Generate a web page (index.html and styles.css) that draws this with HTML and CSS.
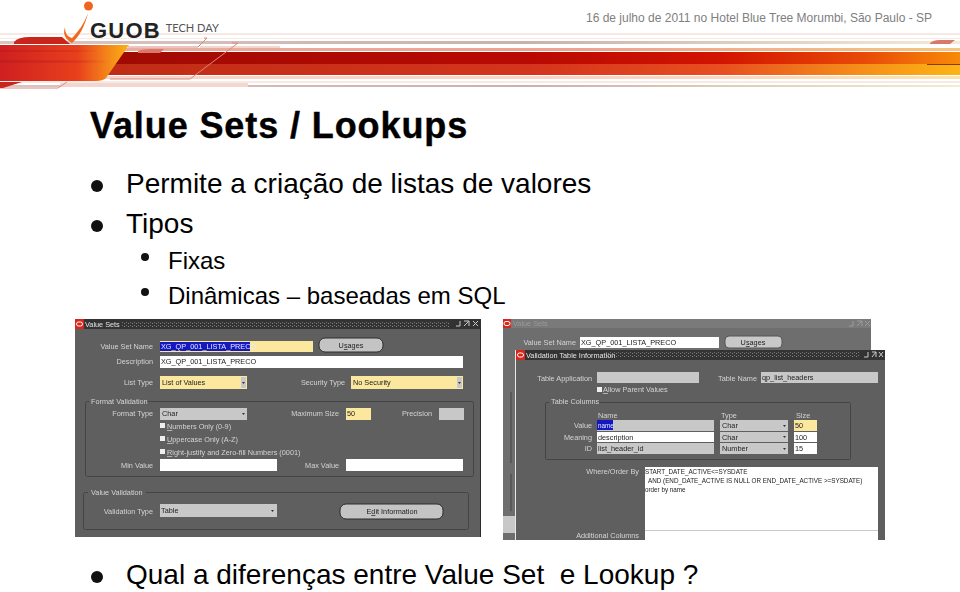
FILE: index.html
```html
<!DOCTYPE html>
<html lang="pt-BR">
<head>
<meta charset="utf-8">
<title>Value Sets / Lookups</title>
<link rel="stylesheet" href="styles.css">
</head>
<body>
<header class="banner">
  <svg class="banner-art" viewBox="0 0 960 90" width="960" height="90" aria-hidden="true">
    <defs>
      <linearGradient id="bandTop"><stop offset="0" stop-color="#9a0a04"/><stop offset=".55" stop-color="#b80a02"/><stop offset=".75" stop-color="#d21400"/><stop offset=".9" stop-color="#e84a08"/><stop offset="1" stop-color="#f88a08"/></linearGradient>
      <linearGradient id="bandLow"><stop offset="0" stop-color="#bb2a14"/><stop offset=".55" stop-color="#d4341c"/><stop offset=".75" stop-color="#e84e20"/><stop offset=".9" stop-color="#f69018"/><stop offset="1" stop-color="#fdb414"/></linearGradient>
      <linearGradient id="fire" x1="0" x2="1" y1="0" y2="0"><stop offset="0" stop-color="#cf1f20"/><stop offset=".6" stop-color="#e8401c"/><stop offset=".85" stop-color="#f58a1a"/><stop offset="1" stop-color="#fbb313"/></linearGradient>
      <linearGradient id="shade"><stop offset="0" stop-color="#b81a1c" stop-opacity=".5"/><stop offset=".7" stop-color="#b81a1c" stop-opacity=".25"/><stop offset="1" stop-color="#b81a1c" stop-opacity="0"/></linearGradient>
      <linearGradient id="greyLine"><stop offset="0" stop-color="#d8c6c2"/><stop offset=".55" stop-color="#cbb1ac"/><stop offset=".8" stop-color="#e2d2c0"/><stop offset="1" stop-color="#f3ead8"/></linearGradient>
      <linearGradient id="pinkLine"><stop offset="0" stop-color="#e8b0a4"/><stop offset=".6" stop-color="#eda390"/><stop offset="1" stop-color="#f8c480"/></linearGradient>
      <linearGradient id="paleLine"><stop offset="0" stop-color="#f5d4ca"/><stop offset=".7" stop-color="#f8d4c4"/><stop offset="1" stop-color="#fbe2b0"/></linearGradient>
    </defs>
    <rect class="s-faint" x="0" y="33" width="960" height="2"/>
    <rect class="s-faint" x="0" y="38" width="960" height="1"/>
    <rect fill="url(#greyLine)" x="0" y="41" width="960" height="3"/>
    <rect class="s-pale" x="200" y="46" width="80" height="2"/>
    <rect fill="url(#pinkLine)" x="0" y="48" width="960" height="3"/>
    <rect fill="url(#bandTop)" x="0" y="52" width="960" height="12"/>
    <rect fill="url(#bandLow)" x="0" y="64" width="960" height="11"/>
    <rect fill="url(#paleLine)" x="0" y="76" width="960" height="3"/>
    <rect class="s-faint" x="0" y="81" width="960" height="2"/>
    <rect fill="url(#greyLine)" x="0" y="85" width="960" height="2"/>
    <rect class="s-pale" x="60" y="83" width="188" height="4"/>
    <path class="s-lip" d="M14 42 Q18 37 30 37 L62 37 L70 44 L14 44 Z"/>
    <path class="s-blob" d="M138 51 Q142 49 150 49 L164 49 L160 53 L138 53 Z"/>
    <path class="s-line" d="M128 47 H198 L207 38 H204"/>
    <path class="s-line" d="M110 79 H190 L238 43 H232"/>
    <path class="s-line" d="M0 88 H58 L67 82"/>
    <path fill="url(#fire)" d="M0 45 H129 L106 78 Q103 81 96 81 H0 Z"/>
    <rect fill="url(#shade)" x="0" y="50" width="100" height="2"/>
    <rect fill="url(#shade)" x="0" y="60" width="110" height="3"/>
    <path class="s-lip" d="M0 82 H22 L3 88 H0 Z"/>
    <path class="s-blob" d="M930 43 Q933 40 940 40 H955 L950 44 H930 Z"/>
    <rect class="s-dark" x="927" y="64" width="33" height="1"/>
    <circle class="logo-dot" cx="88.500" cy="6" r="4.500"/>
    <path class="logo-swoosh" d="M88 13 C85 26 79 37 72 43 C67 40 62 36 65 27 C65 34 68 37 72 38 C78 32 84 24 88 13 Z"/>
  </svg>
  <div class="logo-text"><span class="logo-name">GUOB</span><span class="logo-sub">TECH DAY</span></div>
  <p class="event-date">16 de julho de 2011 no Hotel Blue Tree Morumbi, São Paulo - SP</p>
</header>

<main class="slide">
  <h1 class="slide-title">Value Sets / Lookups</h1>
  <ul class="bullets">
    <li class="bullet">Permite a criação de listas de valores</li>
    <li class="bullet">Tipos</li>
  </ul>
  <ul class="sub-bullets">
    <li class="sub-bullet">Fixas</li>
    <li class="sub-bullet">Dinâmicas – baseadas em SQL</li>
  </ul>

  <div class="shots">
    <svg class="shot" viewBox="75 320 407 219" width="407" height="219" role="img" aria-label="Janela Value Sets">
      <defs>
        <pattern id="dots" width="4" height="3" patternUnits="userSpaceOnUse"><rect width="4" height="3" fill="#333"/><rect x="0" y="0" width="1" height="1" fill="#8a8a8a"/><rect x="2" y="2" width="1" height="1" fill="#777"/></pattern>
      </defs>
      <rect class="win" x="75" y="320" width="406" height="218"/>
      <rect class="win-edge" x="480" y="320" width="1" height="218"/>
      <rect class="titlebar" x="75" y="320" width="406" height="10"/>
      <rect class="titledots" x="122" y="322" width="328" height="6"/>
      <rect class="oracle" x="75" y="320" width="9" height="10"/>
      <rect class="oracle-o" x="76.500" y="323" width="6" height="4" rx="2"/>
      <text class="t-title" x="85" y="328">Value Sets</text>
      <path class="win-ctl" d="M456 327h4v-5M464 322h5v5M464 327l5-5M473 322l5 5M478 322l-5 5"/>

      <text class="t-lab" x="153" y="350" text-anchor="end">Value Set Name</text>
      <rect class="f-y" x="160" y="342" width="153" height="11"/>
      <rect class="f-sel" x="160" y="343" width="90" height="9"/>
      <text class="t-sel" x="161" y="350">XG_QP_001_LISTA_PRECO</text>
      <rect class="btn" x="319" y="339" width="64" height="14" rx="6"/>
      <text class="t-btn" x="351" y="349" text-anchor="middle">U<tspan class="u">s</tspan>ages</text>

      <text class="t-lab" x="153" y="365" text-anchor="end">Description</text>
      <rect class="f-w" x="160" y="357" width="303" height="12"/>
      <text class="t-f" x="161" y="365">XG_QP_001_LISTA_PRECO</text>

      <text class="t-lab" x="153" y="386" text-anchor="end">List Type</text>
      <rect class="f-y" x="160" y="377" width="87" height="13"/>
      <text class="t-f" x="162" y="386">List of Values</text>
      <rect class="drop" x="241" y="378" width="5" height="11"/>
      <path class="arrow" d="M242 383h3l-1.500 2z"/>
      <text class="t-lab" x="345" y="386" text-anchor="end">Security Type</text>
      <rect class="f-y" x="351" y="377" width="112" height="13"/>
      <text class="t-f" x="353" y="386">No Security</text>
      <rect class="drop" x="457" y="378" width="5" height="11"/>
      <path class="arrow" d="M458 383h3l-1.500 2z"/>

      <rect class="group" x="85.500" y="402.500" width="388" height="75" rx="2"/>
      <rect class="legend" x="89" y="398" width="59" height="9"/>
      <text class="t-lab" x="91" y="405">Format Validation</text>
      <text class="t-lab" x="153" y="417" text-anchor="end">Format Type</text>
      <rect class="f-g" x="160" y="409" width="87" height="12"/>
      <text class="t-f" x="162" y="417">Char</text>
      <path class="arrow" d="M242 414h3l-1.500 2z"/>
      <text class="t-lab" x="339" y="417" text-anchor="end">Maximum Size</text>
      <rect class="f-y" x="346" y="409" width="25" height="12"/>
      <text class="t-f" x="347" y="417">50</text>
      <text class="t-lab" x="432" y="417" text-anchor="end">Precision</text>
      <rect class="f-g" x="439" y="409" width="25" height="12"/>

      <rect class="check" x="160" y="424" width="5" height="5"/>
      <text class="t-lab" x="167" y="430"><tspan class="u">N</tspan>umbers Only (0-9)</text>
      <rect class="check" x="160" y="437" width="5" height="5"/>
      <text class="t-lab" x="167" y="443"><tspan class="u">U</tspan>ppercase Only (A-Z)</text>
      <rect class="check" x="160" y="450" width="5" height="5"/>
      <text class="t-lab" x="167" y="456"><tspan class="u">R</tspan>ight-justify and Zero-fill Numbers (0001)</text>

      <text class="t-lab" x="153" y="469" text-anchor="end">Min Value</text>
      <rect class="f-w" x="160" y="460" width="117" height="12"/>
      <text class="t-lab" x="339" y="469" text-anchor="end">Max Value</text>
      <rect class="f-w" x="346" y="460" width="117" height="12"/>

      <rect class="group" x="83.500" y="493.500" width="385" height="37" rx="2"/>
      <rect class="legend" x="88" y="489" width="58" height="9"/>
      <text class="t-lab" x="91" y="496">Value Validation</text>
      <text class="t-lab" x="153" y="515" text-anchor="end">Validation Type</text>
      <rect class="f-g" x="160" y="505" width="117" height="13"/>
      <text class="t-f" x="161" y="514">Table</text>
      <path class="arrow" d="M271 511h3l-1.500 2z"/>
      <rect class="btn" x="340" y="505" width="103" height="15" rx="6"/>
      <text class="t-btn" x="392" y="515" text-anchor="middle">E<tspan class="u">d</tspan>it Information</text>
    </svg>

    <svg class="shot" viewBox="503 320 382 221" width="382" height="221" role="img" aria-label="Janela Validation Table Information">
      <rect class="win-back" x="503" y="320" width="368" height="221"/>
      <rect class="titlebar-back" x="503" y="320" width="368" height="9"/>
      <rect class="oracle" x="503" y="320" width="8" height="9"/>
      <rect class="oracle-o" x="504" y="322.500" width="6" height="4" rx="2"/>
      <text class="t-fade" x="513" y="327">Value Sets</text>
      <path class="win-ctl-back" d="M849 327h4v-5M857 322h5v5M857 327l5-5M865 322l5 5M870 322l-5 5"/>
      <text class="t-lab" x="576" y="346" text-anchor="end">Value Set Name</text>
      <rect class="f-w" x="580" y="338" width="139" height="11"/>
      <text class="t-f" x="581" y="346">XG_QP_001_LISTA_PRECO</text>
      <rect class="btn-flat" x="725" y="337" width="57" height="12" rx="4"/>
      <text class="t-btn" x="753" y="346" text-anchor="middle">U<tspan class="u">s</tspan>ages</text>
      <path class="group-back" d="M511 393V464M511 475V512"/>
      <rect class="f-g" x="503" y="517" width="12" height="17"/>

      <rect class="win-edge-w" x="515" y="351" width="369.500" height="190"/>
      <rect class="win" x="516" y="351" width="369" height="190"/>
      <rect class="titlebar" x="516" y="351" width="369" height="10"/>
      <rect class="titledots" x="606" y="353" width="254" height="6"/>
      <rect class="oracle" x="516" y="351" width="9" height="10"/>
      <rect class="oracle-o" x="517.500" y="354" width="6" height="4" rx="2"/>
      <text class="t-title" x="526" y="359">Validation Table Information</text>
      <path class="win-ctl" d="M864 358h4v-5M872 353h4v5M872 358l4-5M879 353l4 5M883 353l-4 5"/>

      <text class="t-lab" x="592" y="382" text-anchor="end">Table Application</text>
      <rect class="f-g" x="597" y="373" width="102" height="11"/>
      <text class="t-lab" x="757" y="382" text-anchor="end">Table Name</text>
      <rect class="f-g" x="761" y="373" width="117" height="11"/>
      <text class="t-f" x="762" y="381">qp_list_headers</text>
      <rect class="check" x="597" y="388" width="5" height="5"/>
      <text class="t-lab" x="603" y="393"><tspan class="u">A</tspan>llow Parent Values</text>

      <rect class="group" x="545.500" y="403.500" width="305" height="57" rx="1"/>
      <rect class="legend" x="549" y="399" width="49" height="9"/>
      <text class="t-lab" x="551" y="405">Table Columns</text>
      <text class="t-lab" x="598" y="419">Name</text>
      <text class="t-lab" x="721" y="419">Type</text>
      <text class="t-lab" x="796" y="419">Size</text>

      <text class="t-lab" x="592" y="429" text-anchor="end">Value</text>
      <rect class="f-g" x="597" y="421" width="117" height="11"/>
      <rect class="f-sel" x="597" y="421" width="16" height="10"/>
      <text class="t-sel t-small" x="598" y="429">name</text>
      <rect class="f-g" x="720" y="421" width="68" height="11"/>
      <text class="t-f" x="722" y="429">Char</text>
      <path class="arrow" d="M783 426h3l-1.500 2z"/>
      <rect class="f-y" x="794" y="421" width="23" height="11"/>
      <text class="t-f" x="795" y="429">50</text>

      <text class="t-lab" x="592" y="441" text-anchor="end">Meaning</text>
      <rect class="f-w" x="597" y="433" width="117" height="10"/>
      <text class="t-f" x="598" y="441">description</text>
      <rect class="f-g" x="720" y="433" width="68" height="10"/>
      <text class="t-f" x="722" y="441">Char</text>
      <path class="arrow" d="M783 437h3l-1.500 2z"/>
      <rect class="f-w" x="794" y="433" width="23" height="10"/>
      <text class="t-f" x="795" y="441">100</text>

      <text class="t-lab" x="592" y="452" text-anchor="end">ID</text>
      <rect class="f-g" x="597" y="444" width="117" height="11"/>
      <text class="t-f" x="598" y="452">list_header_id</text>
      <rect class="f-g" x="720" y="444" width="68" height="11"/>
      <text class="t-f" x="722" y="452">Number</text>
      <path class="arrow" d="M783 449h3l-1.500 2z"/>
      <rect class="f-w" x="794" y="444" width="23" height="11"/>
      <text class="t-f" x="795" y="452">15</text>

      <text class="t-lab" x="639" y="475" text-anchor="end">Where/Order By</text>
      <rect class="f-w" x="645" y="468" width="233" height="63"/>
      <text class="t-f t-small" x="645" y="475">START_DATE_ACTIVE&lt;=SYSDATE</text>
      <text class="t-f t-small" x="648" y="484">AND (END_DATE_ACTIVE IS NULL OR END_DATE_ACTIVE &gt;=SYSDATE)</text>
      <text class="t-f t-small" x="645" y="493">order by name</text>
      <rect class="f-w" x="645" y="532" width="233" height="9"/>
      <rect class="sep" x="645" y="531" width="233" height="1"/>
      <text class="t-lab" x="639" y="539" text-anchor="end">Additional Columns</text>
    </svg>
  </div>

  <ul class="bullets bullets-end">
    <li class="bullet">Qual a diferenças entre Value Set&nbsp; e Lookup ?</li>
  </ul>
</main>
</body>
</html>
```

FILE: styles.css
```css
* { box-sizing: border-box; }
html, body { margin: 0; padding: 0; }
body {
  width: 960px;
  height: 592px;
  overflow: hidden;
  background: #fff;
  color: #000;
  font-family: "Liberation Sans", Arial, sans-serif;
}

/* Banner */
.banner { position: relative; height: 90px; }
.banner-art { display: block; filter: blur(.6px); }
.s-faint { fill: #f7e9e4; }
.s-pale { fill: #f4d6d0; }
.s-lip { fill: #c8261c; }
.s-blob { fill: #d9776a; }
.s-line { fill: none; stroke: #d98a80; stroke-width: 1; }
.s-dark { fill: #8a3a10; }
.logo-dot { fill: #f0641e; }
.logo-swoosh { fill: #ef6a1e; }
.logo-text {
  position: absolute;
  left: 90px;
  top: 19px;
  display: flex;
  align-items: baseline;
  gap: 5px;
}
.logo-name { font-size: 22px; font-weight: 700; color: #222; letter-spacing: 1.200px; line-height: 24px; }
.logo-sub { font-family: Lato, sans-serif; font-size: 11px; color: #555; line-height: 24px; position: relative; bottom: 6px; }
.event-date {
  position: absolute;
  right: 28px;
  top: 10px;
  margin: 0;
  font-size: 12px;
  line-height: 16px;
  color: #808080;
}

/* Slide text */
.slide-title {
  margin: 16px 0 18px 90px;
  font-size: 36px;
  line-height: 40px;
  font-weight: 700;
  letter-spacing: .9px;
  -webkit-text-stroke: .4px #000;
  color: #000;
}
.bullets { list-style: none; margin: 0; padding: 0 0 0 91px; }
.bullet {
  display: flex;
  align-items: center;
  height: 40px;
  font-size: 28px;
}
.bullet::before {
  content: "";
  flex: none;
  width: 12px;
  height: 12px;
  margin: 4px 23px 0 0;
  border-radius: 50%;
  background: #111;
}
.sub-bullets { list-style: none; margin: -1px 0 6px; padding: 0 0 0 141px; }
.sub-bullet {
  display: flex;
  align-items: center;
  height: 35px;
  font-size: 24px;
}
.sub-bullet::before {
  content: "";
  flex: none;
  width: 8px;
  height: 8px;
  margin: 0 19px 8px 0;
  border-radius: 50%;
  background: #111;
}
.bullets-end { margin-top: 15px; }

/* Screenshots */
.shots { display: flex; gap: 21px; padding-left: 75px; height: 221px; }
.shot { display: block; flex: none; filter: blur(.45px); }
.shot text { font-family: "Liberation Sans", Arial, sans-serif; font-size: 7.300px; }
.shot .t-small { font-size: 6.300px; }
.u { text-decoration: underline; }
.win { fill: #5f5f5f; }
.win-back { fill: #6e6e6e; }
.win-edge { fill: #2c2c2c; }
.win-edge-w { fill: #e8e8e8; }
.titlebar { fill: #333; }
.titlebar-back { fill: #7a7a7a; }
.titledots { fill: url(#dots); }
.oracle { fill: #d8261c; }
.oracle-o { fill: none; stroke: #fff; stroke-width: 1; }
.win-ctl { fill: none; stroke: #ccc; stroke-width: 1; }
.win-ctl-back { fill: none; stroke: #9c9c9c; stroke-width: 1; }
.t-title { fill: #e4e4e4; }
.t-fade { fill: #999; }
.t-lab { fill: #d4d4d4; }
.t-f { fill: #222; }
.t-sel { fill: #e8e8ff; }
.t-btn { fill: #222; }
.f-y { fill: #fbe79e; }
.f-w { fill: #fff; }
.f-g { fill: #c8c8c8; }
.f-sel { fill: #1418c0; }
.drop { fill: #c8c8c8; }
.arrow { fill: #333; }
.btn { fill: #c4c4c4; stroke: #2c2c2c; stroke-width: 1; }
.btn-flat { fill: #c8c8c8; stroke: #555; stroke-width: 1; }
.group { fill: none; stroke: #444; stroke-width: 1; }
.group-back { fill: none; stroke: #444; stroke-width: 1; }
.legend { fill: #5f5f5f; }
.check { fill: #eee; }
.sep { fill: #c8c8c8; }
```
